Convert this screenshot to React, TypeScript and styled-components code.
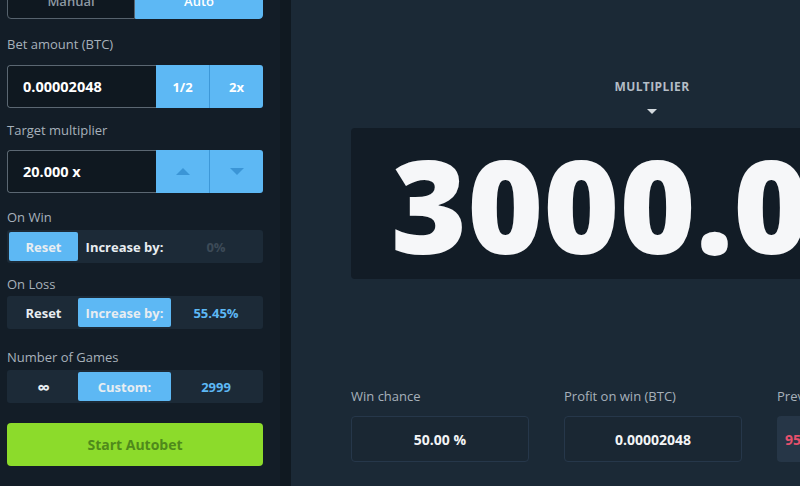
import * as React from 'react';
import styled, { createGlobalStyle } from 'styled-components';

const GlobalStyle = createGlobalStyle`
  html, body {
    margin: 0;
    padding: 0;
    background: #1b2936;
    font-family: "Open Sans", "Liberation Sans", sans-serif;
  }
  * { box-sizing: border-box; }
`

const Page = styled.div`
  display: flex;
  height: 486px;
  width: 800px;
  overflow: hidden;
  background: #1b2936;
`

const Sidebar = styled.aside`
  flex: 0 0 291px;
  display: flex;
  flex-direction: column;
  padding: 0 28px 0 7px;
  background: #131d27;
  box-shadow: inset -11px 0 0 #101921;
`

const Tabs = styled.div`
  display: flex;
  height: 40px;
  margin-top: -21px;
`

const Tab = styled.div<{ $active?: boolean }>`
  flex: 1;
  display: flex;
  align-items: flex-end;
  justify-content: center;
  padding-bottom: 8px;
  font-size: 13px;
  font-weight: 600;
  color: ${p => p.$active ? '#ffffff' : '#8d98a3'};
  background: ${p => p.$active ? '#5db8f4' : '#0f1820'};
  border: 1px solid ${p => p.$active ? '#5db8f4' : '#56626d'};
  border-radius: ${p => p.$active ? '0 0 4px 0' : '0 0 0 4px'};
`

const Label = styled.div<{ $top: number, $bottom: number }>`
  margin-top: ${p => p.$top}px;
  margin-bottom: ${p => p.$bottom}px;
  height: 18px;
  line-height: 18px;
  font-size: 13px;
  font-weight: 500;
  color: #a7b1bb;
`

const InputGroup = styled.div`
  display: flex;
  height: 43px;
  border-radius: 3px;
  overflow: hidden;
`

const InputField = styled.div`
  flex: 0 0 149px;
  display: flex;
  align-items: center;
  padding-left: 15px;
  background: #0f1820;
  border: 1px solid #5b6772;
  border-right: none;
  border-radius: 3px 0 0 3px;
  font-size: 14.5px;
  font-weight: 700;
  color: #ffffff;
`

const SideButton = styled.div`
  flex: 1;
  display: flex;
  align-items: center;
  justify-content: center;
  background: #5db8f4;
  font-size: 13px;
  font-weight: 700;
  color: #ffffff;
  & + & {
    border-left: 1px solid #3d98d8;
  }
`

const Arrow = styled.div<{ $up?: boolean }>`
  width: 0;
  height: 0;
  border-left: 7px solid transparent;
  border-right: 7px solid transparent;
  ${p => p.$up
    ? 'border-bottom: 7px solid #3b95d6;'
    : 'border-top: 7px solid #3b95d6;'}
`

const Segmented = styled.div`
  display: grid;
  grid-template-columns: 69px 93px 1fr;
  height: 33px;
  padding: 2px;
  background: #1c2a37;
  border-radius: 3px;
`

const Segment = styled.div<{ $active?: boolean, $tone?: 'white' | 'blue' | 'dim', $big?: boolean }>`
  display: flex;
  align-items: center;
  justify-content: center;
  border-radius: 2px;
  font-size: ${p => p.$big ? 18 : 13}px;
  font-weight: 700;
  background: ${p => p.$active ? '#5db8f4' : 'transparent'};
  color: ${p => p.$tone === 'blue' ? '#5db8f4' : p.$tone === 'dim' ? '#3c4a57' : '#e8edf1'};
`

const StartButton = styled.div`
  margin-top: 20px;
  height: 43px;
  display: flex;
  align-items: center;
  justify-content: center;
  background: #8cdb2b;
  border-radius: 4px;
  font-size: 14px;
  font-weight: 700;
  color: #4f8a1b;
`

const Main = styled.main`
  flex: 1;
  overflow: hidden;
`

const Stage = styled.div`
  width: 722px;
  padding: 79px 60px 0 60px;
  display: flex;
  flex-direction: column;
  align-items: center;
`

const StageTitle = styled.div`
  height: 16px;
  line-height: 16px;
  font-size: 12px;
  font-weight: 700;
  letter-spacing: 0.4px;
  color: #b4bdc6;
`

const Pointer = styled.div`
  margin-top: 14px;
  width: 0;
  height: 0;
  border-left: 5px solid transparent;
  border-right: 5px solid transparent;
  border-top: 5px solid #d3d9de;
`

const MultiplierBox = styled.div`
  margin-top: 14px;
  width: 100%;
  height: 151px;
  display: flex;
  align-items: center;
  padding-left: 40px;
  background: #121c26;
  border-radius: 4px;
  font-size: 130px;
  font-weight: 800;
  color: #f6f7f9;
  white-space: nowrap;
  line-height: 1;
`

const Stats = styled.div`
  margin-top: 109px;
  width: 100%;
  display: grid;
  grid-template-columns: repeat(3, 178px);
  column-gap: 35px;
`

const Stat = styled.div`
  display: flex;
  flex-direction: column;
  gap: 12px;
`

const StatLabel = styled.div`
  height: 16px;
  line-height: 16px;
  font-size: 13px;
  font-weight: 500;
  color: #a7b1bb;
  white-space: nowrap;
`

const StatValue = styled.div`
  height: 46px;
  display: flex;
  align-items: center;
  justify-content: center;
  border: 1px solid #26374a;
  border-radius: 4px;
  background: #1a2733;
  font-size: 14px;
  font-weight: 700;
  color: #f2f4f6;
`

const History = styled.div`
  height: 46px;
  display: flex;
  align-items: center;
  padding-left: 8px;
  background: #263647;
  border-radius: 4px;
  font-size: 14px;
  font-weight: 700;
  color: #e5506c;
`

export default function App() {
  return (
    <Page>
      <GlobalStyle />
      <Sidebar>
        <Tabs>
          <Tab>Manual</Tab>
          <Tab $active>Auto</Tab>
        </Tabs>

        <Label $top={16} $bottom={12}>Bet amount (BTC)</Label>
        <InputGroup>
          <InputField>0.00002048</InputField>
          <SideButton>1/2</SideButton>
          <SideButton>2x</SideButton>
        </InputGroup>

        <Label $top={13} $bottom={11}>Target multiplier</Label>
        <InputGroup>
          <InputField>20.000 x</InputField>
          <SideButton><Arrow $up /></SideButton>
          <SideButton><Arrow /></SideButton>
        </InputGroup>

        <Label $top={15} $bottom={4}>On Win</Label>
        <Segmented>
          <Segment $active>Reset</Segment>
          <Segment>Increase by:</Segment>
          <Segment $tone="dim">0%</Segment>
        </Segmented>

        <Label $top={12} $bottom={3}>On Loss</Label>
        <Segmented>
          <Segment>Reset</Segment>
          <Segment $active>Increase by:</Segment>
          <Segment $tone="blue">55.45%</Segment>
        </Segmented>

        <Label $top={19} $bottom={4}>Number of Games</Label>
        <Segmented>
          <Segment $big>∞</Segment>
          <Segment $active>Custom:</Segment>
          <Segment $tone="blue">2999</Segment>
        </Segmented>

        <StartButton>Start Autobet</StartButton>
      </Sidebar>

      <Main>
        <Stage>
          <StageTitle>MULTIPLIER</StageTitle>
          <Pointer />
          <MultiplierBox>3000.00x</MultiplierBox>
          <Stats>
            <Stat>
              <StatLabel>Win chance</StatLabel>
              <StatValue>50.00 %</StatValue>
            </Stat>
            <Stat>
              <StatLabel>Profit on win (BTC)</StatLabel>
              <StatValue>0.00002048</StatValue>
            </Stat>
            <Stat>
              <StatLabel>Previous rolls</StatLabel>
              <History>95.12</History>
            </Stat>
          </Stats>
        </Stage>
      </Main>
    </Page>
  );
}
